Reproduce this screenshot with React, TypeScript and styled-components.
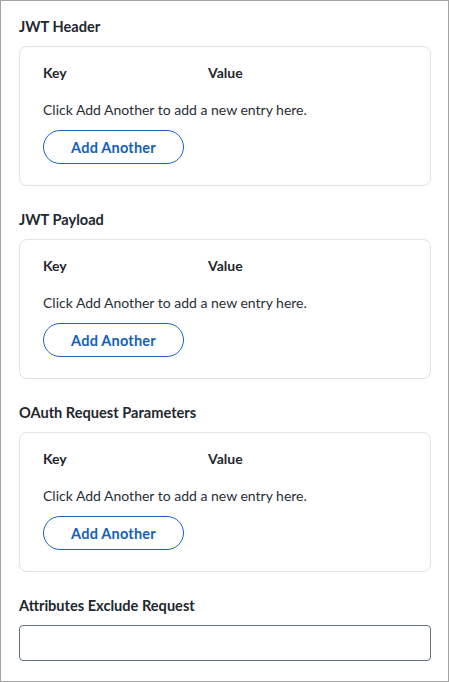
import React from "react";
import styled, { createGlobalStyle } from "styled-components";

const Global = createGlobalStyle`
  html, body { margin: 0; padding: 0; background: #fff; }
  body { font-family: Lato, "Liberation Sans", sans-serif; color: #222831; }
`;

const Frame = styled.div`
  box-sizing: border-box;
  width: 449px;
  height: 682px;
  border: 1px solid #a3a3a3;
  padding: 15px 17px 0 18px;
  display: flex;
  flex-direction: column;
`;

const Section = styled.section`
  display: flex;
  flex-direction: column;
  gap: 10px;
  margin-bottom: 23px;
`;

const Title = styled.h3`
  margin: 0;
  font-size: 14.6px;
  line-height: 21px;
  font-weight: 700;
  color: #23272e;
`;

const Card = styled.div`
  box-sizing: border-box;
  margin-top: -1px;
  border: 1px solid #e1e1e8;
  border-radius: 8px;
  padding: 16px 23px 21px 23px;
  display: flex;
  flex-direction: column;
  align-items: flex-start;
`;

const HeaderRow = styled.div`
  display: grid;
  grid-template-columns: 165px auto;
  font-size: 14px;
  line-height: 20px;
  font-weight: 700;
  color: #23272e;
`;

const Hint = styled.p`
  margin: 17px 0 0 0;
  font-size: 14px;
  line-height: 20px;
  color: #2a2f36;
`;

const AddButton = styled.button`
  box-sizing: border-box;
  margin-top: 10px;
  width: 141px;
  height: 34px;
  border: 1px solid #1b63c4;
  border-radius: 17px;
  background: #fff;
  color: #1561b8;
  font-family: Lato, "Liberation Sans", sans-serif;
  font-size: 14.5px;
  font-weight: 700;
  letter-spacing: 0.2px;
  padding: 0;
  cursor: pointer;
`;

const TextInput = styled.input`
  box-sizing: border-box;
  width: 100%;
  height: 36px;
  margin-top: -1px;
  border: 1px solid #66717e;
  border-radius: 4px;
  padding: 0 10px;
  font-size: 14px;
  font-family: Lato, "Liberation Sans", sans-serif;
  outline: none;
`;

const KeyValueSection = ({ title }: { title: string }) => (
  <Section>
    <Title>{title}</Title>
    <Card>
      <HeaderRow>
        <span>Key</span>
        <span>Value</span>
      </HeaderRow>
      <Hint>Click Add Another to add a new entry here.</Hint>
      <AddButton type="button">Add Another</AddButton>
    </Card>
  </Section>
);

export default function App() {
  return (
    <>
      <Global />
      <Frame>
        <KeyValueSection title="JWT Header" />
        <KeyValueSection title="JWT Payload" />
        <KeyValueSection title="OAuth Request Parameters" />
        <Section>
          <Title>Attributes Exclude Request</Title>
          <TextInput type="text" />
        </Section>
      </Frame>
    </>
  );
}
